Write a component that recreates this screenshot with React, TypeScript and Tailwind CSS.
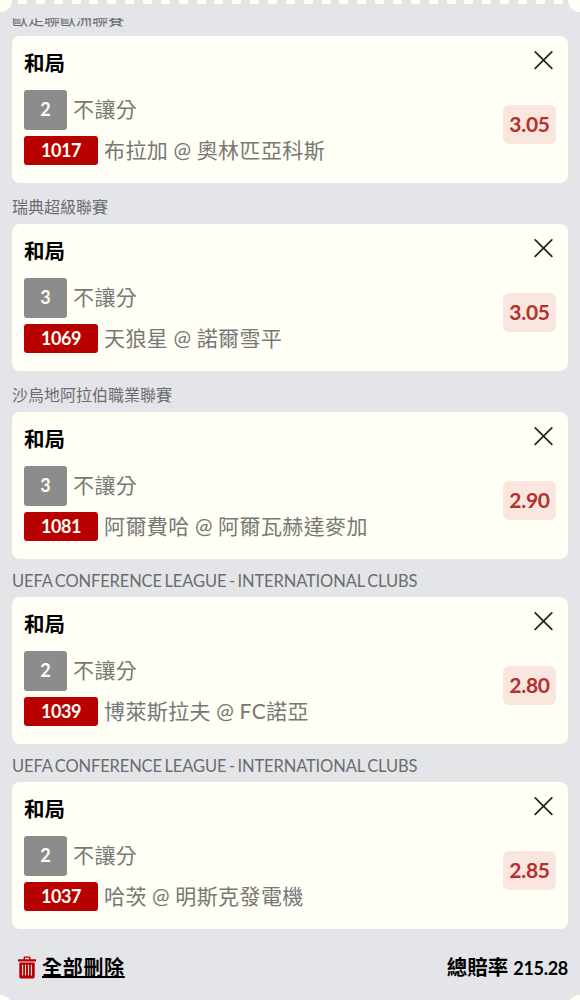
import React from "react";
import clsx from "clsx";

type Bet = {
  league: string;
  latin?: boolean;
  line: string;
  code: string;
  teams: string;
  odds: string;
};

const bets: Bet[] = [
  { league: "歐足聯歐洲聯賽", line: "2", code: "1017", teams: "布拉加 @ 奧林匹亞科斯", odds: "3.05" },
  { league: "瑞典超級聯賽", line: "3", code: "1069", teams: "天狼星 @ 諾爾雪平", odds: "3.05" },
  { league: "沙烏地阿拉伯職業聯賽", line: "3", code: "1081", teams: "阿爾費哈 @ 阿爾瓦赫達麥加", odds: "2.90" },
  { league: "UEFA CONFERENCE LEAGUE - INTERNATIONAL CLUBS", latin: true, line: "2", code: "1039", teams: "博萊斯拉夫 @ FC諾亞", odds: "2.80" },
  { league: "UEFA CONFERENCE LEAGUE - INTERNATIONAL CLUBS", latin: true, line: "2", code: "1037", teams: "哈茨 @ 明斯克發電機", odds: "2.85" },
];

const CloseIcon = () => (
  <svg width="20" height="20" viewBox="0 0 20 20" fill="none" stroke="#222" strokeWidth="1.7" strokeLinecap="round">
    <path d="M2.2 1.8 18.8 18.4M18.8 1.8 2.2 18.4" />
  </svg>
);

const TrashIcon = () => (
  <svg width="18" height="23" viewBox="0 0 18 23" fill="none">
    <path d="M0 3.2h5.6V1.4a1 1 0 0 1 1-1h4.8a1 1 0 0 1 1 1v1.8H18v2.2H0zM7 3.2h4V1.8H7z" fill="#b80000" fillRule="evenodd" />
    <path d="M1.3 6.4h15.4v14.4a1.6 1.6 0 0 1-1.6 1.6H2.9a1.6 1.6 0 0 1-1.6-1.6z" fill="#b80000" />
    <path d="M4.6 8.8v10.8M7.5 8.8v10.8M10.5 8.8v10.8M13.4 8.8v10.8" stroke="#e4e5e8" strokeWidth="1.1" />
  </svg>
);

const Perforation = () => (
  <div className="flex h-[5px] justify-between bg-[#e3e5e2] pr-[17px] pl-[18px]">
    {Array.from({ length: 31 }, (_, i) => (
      <span key={i} className="h-[4px] w-[9px] rounded-[1px] bg-[#fffff5]" />
    ))}
  </div>
);

const BetCard = ({ bet }: { bet: Bet }) => (
  <div>
    <div
      className={clsx(
        "leading-[24px] whitespace-nowrap text-[#6b6c6d]",
        bet.latin
          ? "h-[38.5px] pt-[10px] text-[16.5px] tracking-[-0.13px] [word-spacing:-1.5px]"
          : "h-[41.5px] pt-[12px] text-[16px]"
      )}
    >
      {bet.league}
    </div>
    <div className="flex h-[146.5px] justify-between rounded-lg bg-[#fffff5] px-3">
      <div className="pt-[12px]">
        <div className="h-[41.5px] pt-[1px] text-[20.5px] leading-[28px] font-bold text-black">和局</div>
        <div className="flex h-[40.5px] gap-[6px]">
          <span className="flex w-[43px] items-center justify-center rounded-[3px] bg-[#8c8c8c] text-[18px] font-bold text-[#fffff5]">
            {bet.line}
          </span>
          <span className="pt-[5px] text-[21px] leading-[28px] tracking-[0.4px] text-[#777]">不讓分</span>
        </div>
        <div className="mt-[5.5px] flex h-[29.5px] items-center gap-[6px]">
          <span className="flex h-full w-[74px] items-center justify-center rounded-[3px] bg-[#b80000] text-[18px] font-bold tracking-[-0.4px] text-[#fffff5]">
            {bet.code}
          </span>
          <span className="text-[21px] leading-[28px] tracking-[0.4px] [word-spacing:-0.5px] whitespace-pre text-[#777]">{bet.teams}</span>
        </div>
      </div>
      <div className="flex flex-col items-end pt-[14px]">
        <button className="mr-[3px] h-[20px]">
          <CloseIcon />
        </button>
        <span className="mt-[34.5px] flex h-[39px] w-[53px] items-center justify-center rounded-md bg-[#f8e6df] text-[21px] font-bold tracking-[-0.3px] text-[#b5302c]">
          {bet.odds}
        </span>
      </div>
    </div>
  </div>
);

export default function App() {
  return (
    <div className="relative h-[1000px] w-[580px] overflow-hidden bg-[#e4e5e8] font-['Lato','Noto_Sans_CJK_TC',sans-serif]">
      <Perforation />
      {/* scrolled list, first league name is cut by the top edge */}
      <div className="mt-[13px] h-[911px] overflow-hidden px-3">
        <div className="-mt-[23.5px]">
          {bets.map((bet) => (
            <BetCard key={bet.code} bet={bet} />
          ))}
        </div>
      </div>
      <div className="flex h-[71px] justify-between pt-[23px] pr-3 pl-[18px] text-[20px] leading-[30px] font-bold text-black">
        <button className="flex gap-[6px]">
          <span className="pt-[4px]">
            <TrashIcon />
          </span>
          <span className="tracking-[0.7px] underline">全部刪除</span>
        </button>
        <span className="flex items-baseline gap-[5px] text-[20.5px]">
          總賠率 <span className="text-[18px] tracking-[-0.3px]">215.28</span>
        </span>
      </div>
      {/* ticket notches */}
      <span className="absolute -top-[12px] -left-[12px] size-[24px] rounded-full bg-[#fffff5]" />
      <span className="absolute -top-[12px] -right-[12px] size-[24px] rounded-full bg-[#fffff5]" />
      <span className="absolute -bottom-[19px] -left-[12px] size-[24px] rounded-full bg-[#fffff5]" />
      <span className="absolute -right-[12px] -bottom-[19px] size-[24px] rounded-full bg-[#fffff5]" />
    </div>
  );
}
